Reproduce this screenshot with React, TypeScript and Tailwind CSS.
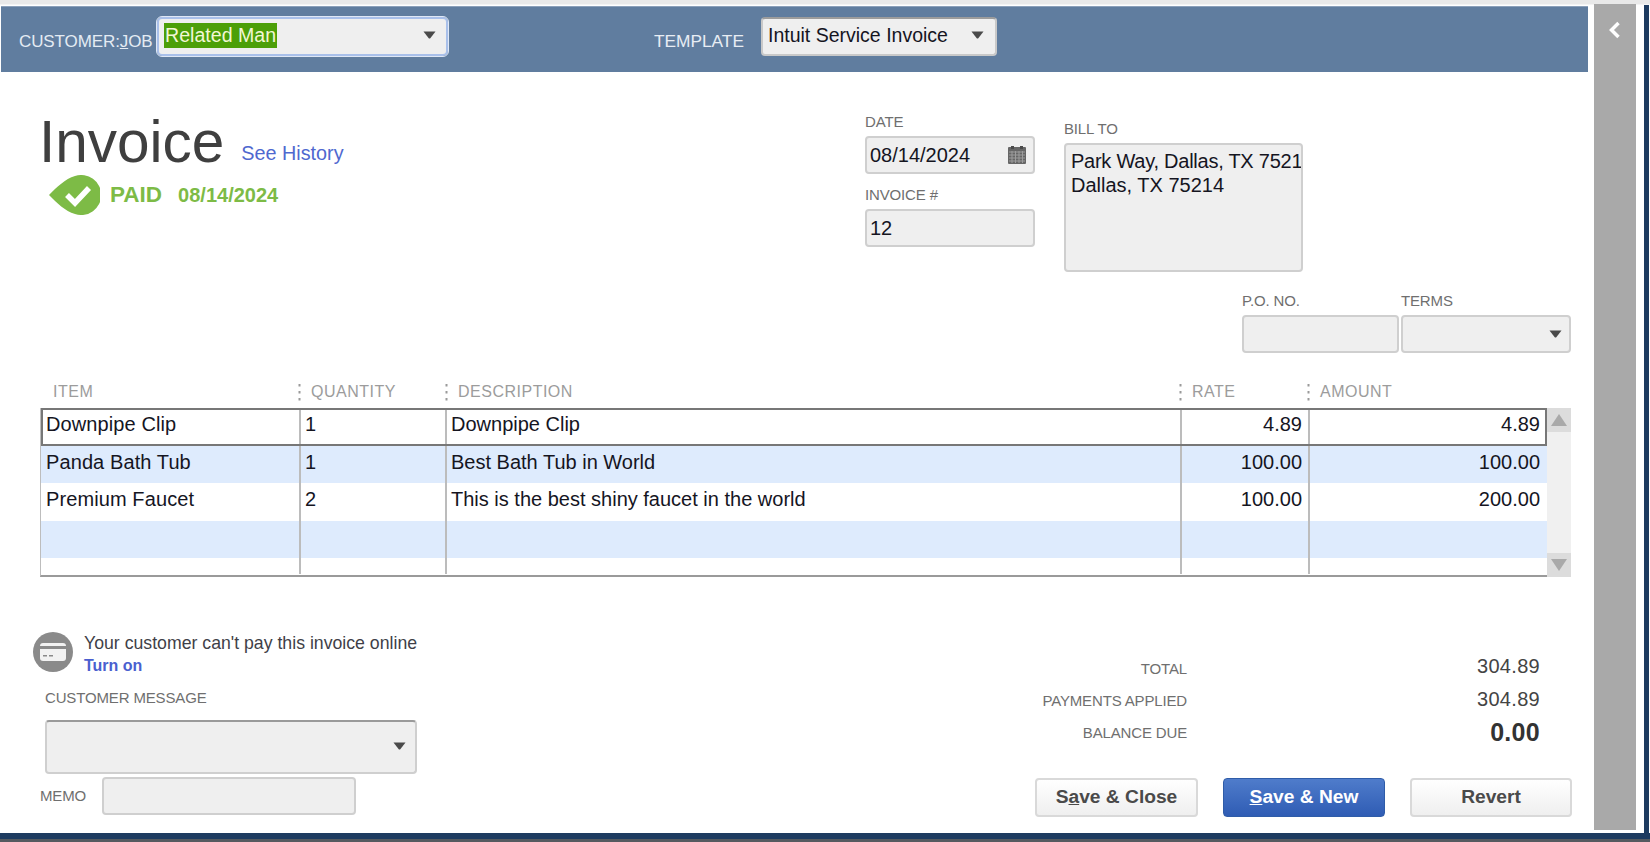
import React from "react";

function Arrow({ className = "" }: { className?: string }) {
  return (
    <svg width="13" height="8" viewBox="0 0 13 8" className={className}>
      <path d="M0.5 0.5 H12.5 L7.5 7 Q6.5 8 5.5 7 Z" fill="#4a4a4a" />
    </svg>
  );
}

function PaidIcon() {
  return (
    <svg width="51" height="40" viewBox="0 0 51 40" className="shrink-0">
      <path d="M0 20 C8 12 16 4 26 1 A20 20 0 1 1 26 39 C16 36 8 28 0 20 Z" fill="#7dbb46" />
      <path d="M18 20 L26 28 L40 13" fill="none" stroke="#ffffff" strokeWidth="5.5" />
    </svg>
  );
}

function CardIcon() {
  return (
    <svg width="40" height="40" viewBox="0 0 40 40" className="shrink-0">
      <circle cx="20" cy="20" r="20" fill="#8a8a8a" />
      <rect x="7" y="11" width="26" height="18" rx="3" fill="#f2f2f2" />
      <rect x="7" y="14" width="26" height="3" fill="#8a8a8a" />
      <rect x="10" y="23" width="4" height="1.5" fill="#8a8a8a" />
      <rect x="16" y="23" width="4" height="1.5" fill="#8a8a8a" />
    </svg>
  );
}

function CalendarIcon() {
  return (
    <svg width="18" height="18" viewBox="0 0 18 18">
      <rect x="0" y="1" width="18" height="17" rx="1" fill="#666666" />
      <rect x="3" y="0" width="3" height="3" fill="#4a4a4a" />
      <rect x="12" y="0" width="3" height="3" fill="#4a4a4a" />
      <path d="M1 6 H17 M1 9 H17 M1 12 H17 M1 15 H17 M4 5 V17 M7.5 5 V17 M11 5 V17 M14.5 5 V17" stroke="#9c9c9c" strokeWidth="1" />
    </svg>
  );
}

function Sep() {
  return (
    <svg width="3" height="17" viewBox="0 0 3 17" className="shrink-0">
      <rect x="0.5" y="0" width="2" height="2.5" fill="#9a9a9a" />
      <rect x="0.5" y="7" width="2" height="2.5" fill="#9a9a9a" />
      <rect x="0.5" y="14" width="2" height="2.5" fill="#9a9a9a" />
    </svg>
  );
}

const rows = [
  { item: "Downpipe Clip", qty: "1", desc: "Downpipe Clip", rate: "4.89", amount: "4.89", cls: "h-[38px] bg-white outline-2 -outline-offset-2 outline-[#777777]" },
  { item: "Panda Bath Tub", qty: "1", desc: "Best Bath Tub in World", rate: "100.00", amount: "100.00", cls: "h-[37px] bg-[#deebfd]" },
  { item: "Premium Faucet", qty: "2", desc: "This is the best shiny faucet in the world", rate: "100.00", amount: "200.00", cls: "h-[38px] bg-white" },
  { item: "", qty: "", desc: "", rate: "", amount: "", cls: "h-[37px] bg-[#deebfd]" },
  { item: "", qty: "", desc: "", rate: "", amount: "", cls: "h-[16px] bg-white" },
];

const field = "bg-[#efefef] border-2 border-[#cfcfcf] rounded-[4px]";
const label = "text-[15px] leading-[20px] text-[#6f6f6f] tracking-[-0.15px]";
const colHead = "text-[16px] leading-[20px] tracking-[0.5px] text-[#9c9c9c]";

export default function App() {
  return (
    <div className="w-[1650px] h-[842px] bg-white flex flex-col overflow-hidden font-['Liberation_Sans',Arial,sans-serif] text-[20px] text-[#15151f]">
      <div className="h-[5px] shrink-0 bg-[#e9e9e9] border-b border-[#f4f4f4]" />
      <div className="flex-1 flex min-h-0">
        <div className="w-[1588px] shrink-0 pl-px flex flex-col pt-px">
          {/* Header bar */}
          <div className="h-[66px] shrink-0 bg-[#607d9f] border-t border-[#8ba0ba] flex items-start text-[#e4ebf3]">
            <span className="ml-[18px] mt-[25px] text-[17px] leading-[20px] tracking-[-0.1px] w-[138px] shrink-0">
              CUSTOMER:<u>J</u>OB
            </span>
            <div className="mt-[10px] w-[291px] h-[39px] shrink-0 bg-[#efefef] border-2 border-[#a9c0ea] rounded-[5px] outline outline-[#dfe8f6] flex items-center pl-[5px] pr-[10px] justify-between">
              <span className="bg-[#4c9f08] text-[#f2f7d5] text-[19.6px] h-[25px] leading-[24px] px-px -mt-[2px]">Related Man</span>
              <Arrow className="-mt-[3px]" />
            </div>
            <span className="ml-[206px] mt-[24px] text-[17.3px] leading-[20px] w-[107px] shrink-0 text-[#e8edf4]">TEMPLATE</span>
            <div className="mt-[10px] w-[236px] h-[39px] shrink-0 bg-[#efefef] border-2 border-[#c9c9c9] border-t-[#9c9c9c] rounded-[4px] flex items-center pl-[5px] pr-[11px] justify-between text-[#15151f]">
              <span className="text-[19.5px] -mt-[1px]">Intuit Service Invoice</span>
              <Arrow className="-mt-[3px]" />
            </div>
          </div>

          {/* Title / date / bill to */}
          <div className="h-[200px] shrink-0 flex items-start">
            <div className="w-[864px] shrink-0 pl-[38px] pt-[36px]">
              <div className="flex items-baseline">
                <span className="text-[58.5px] leading-[68px] text-[#3f3f3f]">Invoice</span>
                <span className="ml-[17px] text-[19.8px] leading-[24px] text-[#4f68cf] -translate-y-[2px]">See History</span>
              </div>
              <div className="flex items-center ml-[10px] -mt-[1px]">
                <PaidIcon />
                <span className="ml-[10px] text-[22.5px] leading-[24px] font-bold text-[#7dbb46]">PAID</span>
                <span className="ml-[16px] text-[20px] leading-[24px] font-bold text-[#7dbb46]">08/14/2024</span>
              </div>
            </div>
            <div className="w-[170px] shrink-0 pt-[40px]">
              <div className={label}>DATE</div>
              <div className={`${field} h-[38px] mt-[4px] flex items-center justify-between pl-[3px] pr-[7px]`}>
                <span>08/14/2024</span>
                <CalendarIcon />
              </div>
              <div className={`${label} mt-[11px]`}>INVOICE #</div>
              <div className={`${field} h-[38px] mt-[4px] flex items-center pl-[3px]`}>12</div>
            </div>
            <div className="ml-[29px] w-[239px] shrink-0 pt-[46px]">
              <div className={`${label} translate-y-px`}>BILL TO</div>
              <div className={`${field} h-[129px] mt-[5px] pl-[5px] pt-[4px] leading-[24px] overflow-hidden whitespace-nowrap`}>
                <div className="tracking-[-0.25px]">Park Way, Dallas, TX 7521</div>
                <div>Dallas, TX 75214</div>
              </div>
            </div>
          </div>

          {/* P.O. / Terms */}
          <div className="h-[81px] shrink-0 flex items-start pl-[1241px]">
            <div className="w-[157px] shrink-0 pt-[19px]">
              <div className={label}>P.O. NO.</div>
              <div className={`${field} h-[38px] mt-[4px]`} />
            </div>
            <div className="ml-[2px] w-[170px] shrink-0 pt-[19px]">
              <div className={label}>TERMS</div>
              <div className={`${field} h-[38px] mt-[4px] flex items-center justify-end pr-[7px]`}>
                <Arrow />
              </div>
            </div>
          </div>

          {/* Table head */}
          <div className="h-[55px] shrink-0 pt-[29px] pl-[40px] flex items-start">
            <div className="w-[257px] shrink-0 pl-[12px] h-[20px] flex"><span className={colHead}>ITEM</span></div>
            <div className="w-[147px] shrink-0 flex items-center gap-[10px]"><Sep /><span className={colHead}>QUANTITY</span></div>
            <div className="w-[734px] shrink-0 flex items-center gap-[10px]"><Sep /><span className={colHead}>DESCRIPTION</span></div>
            <div className="w-[128px] shrink-0 flex items-center gap-[10px]"><Sep /><span className={colHead}>RATE</span></div>
            <div className="w-[200px] shrink-0 flex items-center gap-[10px]"><Sep /><span className={colHead}>AMOUNT</span></div>
          </div>

          {/* Table */}
          <div className="h-[169px] shrink-0 ml-[39px] w-[1531px] flex">
            <div className="w-[1507px] shrink-0 flex flex-col border-l border-[#bdbdbd] border-b-2 border-b-[#9a9a9a]">
              {rows.map((r, i) => (
                <div key={i} className={`grid grid-cols-[260px_146px_735px_128px_237px] shrink-0 ${r.cls}`}>
                  <div className="border-r-2 border-[#bcbcbc] pl-[5px] pb-[6px] flex items-center whitespace-nowrap tracking-[0.1px]">{r.item}</div>
                  <div className="border-r-2 border-[#bcbcbc] pl-[4px] pb-[6px] flex items-center">{r.qty}</div>
                  <div className="border-r-2 border-[#bcbcbc] pl-[4px] pb-[6px] flex items-center whitespace-nowrap">{r.desc}</div>
                  <div className="border-r-2 border-[#bcbcbc] pr-[6px] pb-[6px] flex items-center justify-end">{r.rate}</div>
                  <div className="pr-[7px] pb-[6px] flex items-center justify-end">{r.amount}</div>
                </div>
              ))}
            </div>
            <div className="w-[24px] shrink-0 flex flex-col bg-[#f0f0f0]">
              <div className="h-[24px] bg-[#dcdcdc] flex items-center justify-center shrink-0">
                <svg width="16" height="12" viewBox="0 0 16 12"><path d="M8 0 L16 12 H0 Z" fill="#a9a9a9" /></svg>
              </div>
              <div className="flex-1" />
              <div className="h-[24px] bg-[#dcdcdc] flex items-center justify-center shrink-0">
                <svg width="16" height="12" viewBox="0 0 16 12"><path d="M0 0 H16 L8 12 Z" fill="#a9a9a9" /></svg>
              </div>
            </div>
          </div>

          {/* Footer */}
          <div className="flex-1 flex items-start min-h-0">
            <div className="w-[1034px] shrink-0">
              <div className="flex items-start ml-[32px] mt-[55px]">
                <CardIcon />
                <div className="ml-[11px]">
                  <div className="text-[17.7px] leading-[22px] text-[#3f3f48]">Your customer can't pay this invoice online</div>
                  <div className="text-[16px] leading-[23px] font-bold text-[#4a5fcf]">Turn on</div>
                </div>
              </div>
              <div className={`${label} ml-[44px] mt-[11px]`}>CUSTOMER MESSAGE</div>
              <div className={`${field} ml-[44px] mt-[12px] w-[372px] h-[54px] border-t-[#9a9a9a] flex items-center justify-end pr-[9px]`}>
                <Arrow className="-mt-[2px]" />
              </div>
              <div className="flex items-center ml-[39px] mt-[3px]">
                <span className={`${label} w-[62px] shrink-0 tracking-[-0.4px]`}>MEMO</span>
                <div className={`${field} w-[254px] h-[38px]`} />
              </div>
            </div>
            <div className="w-[538px] shrink-0">
              <div className="grid grid-cols-[152px_353px] items-center mt-[73px] text-right">
                <span className={`${label} mt-[4px]`}>TOTAL</span>
                <span className="text-[20px] leading-[33px] text-[#444444] tracking-[0.3px]">304.89</span>
                <span className={`${label} mt-[2px] whitespace-nowrap`}>PAYMENTS APPLIED</span>
                <span className="text-[20px] leading-[33px] text-[#444444] tracking-[0.3px]">304.89</span>
                <span className={label}>BALANCE DUE</span>
                <span className="text-[25px] leading-[33px] font-bold text-[#333333] tracking-[0.3px]">0.00</span>
              </div>
              <div className="flex mt-[29px] gap-[25px] text-[19.2px] font-bold">
                <div className="w-[163px] h-[39px] shrink-0 rounded-[4px] border-2 border-[#d9d9d9] bg-linear-to-b from-white to-[#efefef] text-[#4a4a4a] flex items-center justify-center">
                  <span>S<u>a</u>ve &amp; Close</span>
                </div>
                <div className="w-[162px] h-[39px] shrink-0 rounded-[4px] border border-[#2f5ca8] bg-linear-to-b from-[#4f7ccb] to-[#2f5cb4] text-white flex items-center justify-center">
                  <span><u>S</u>ave &amp; New</span>
                </div>
                <div className="w-[162px] h-[39px] shrink-0 rounded-[4px] border-2 border-[#d9d9d9] bg-linear-to-b from-white to-[#efefef] text-[#4a4a4a] flex items-center justify-center">
                  <span>Revert</span>
                </div>
              </div>
            </div>
          </div>
        </div>

        {/* Right rail */}
        <div className="w-[42px] ml-[6px] shrink-0 -mt-px mb-[3px] bg-[#a9a9a9] flex justify-center pt-[17px]">
          <svg width="14" height="18" viewBox="0 0 14 18">
            <path d="M10.5 2 L3.5 9 L10.5 16" fill="none" stroke="#ffffff" strokeWidth="3.5" />
          </svg>
        </div>
        <div className="w-[8px] shrink-0" />
        <div className="w-[5px] shrink-0 bg-[#1d3b60]" />
      </div>
      <div className="h-[9px] shrink-0 bg-[#1d3b60] border-b-[3px] border-[#555a60]" />
    </div>
  );
}
